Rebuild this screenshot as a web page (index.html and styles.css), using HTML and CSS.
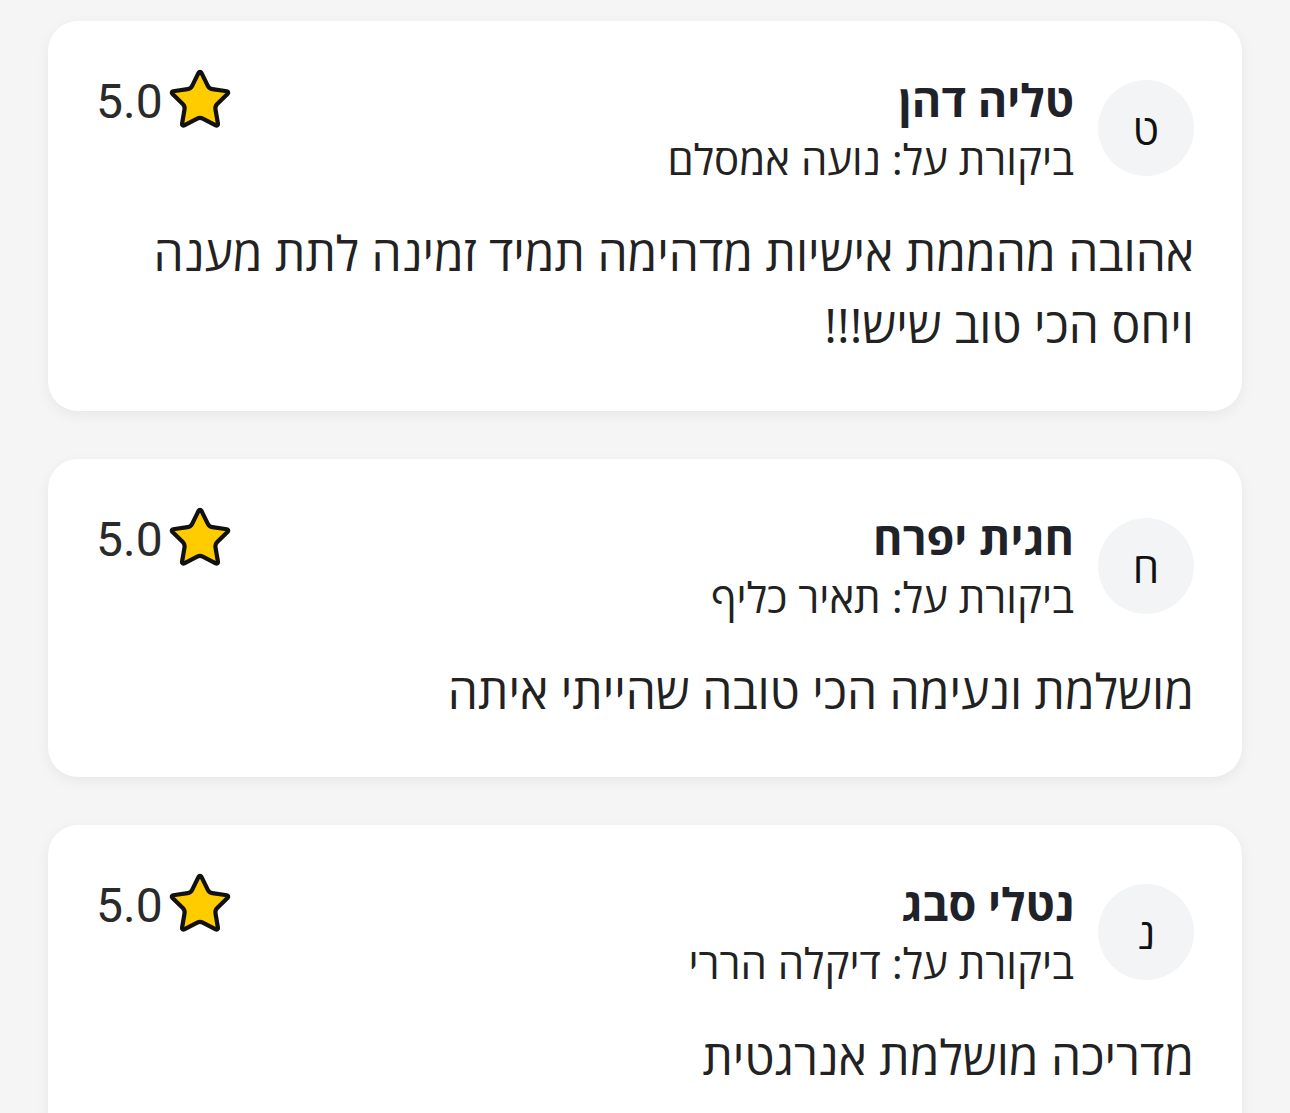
FILE: index.html
```html
<!DOCTYPE html>
<html lang="he" dir="rtl">
<head>
    <meta charset="UTF-8">
    <meta name="viewport" content="width=device-width, initial-scale=1.0">
    <title>ביקורות</title>
    <link rel="stylesheet" href="styles.css">
</head>
<body>
    <div class="reviews">
        <div class="review-card">
            <div class="review-head">
                <div class="author">
                    <div class="avatar">ט</div>
                    <div class="author-info">
                        <div class="author-name">טליה דהן</div>
                        <div class="review-target">ביקורת על: נועה אמסלם</div>
                    </div>
                </div>
                <div class="rating">
                    <svg class="star" viewBox="1 1 22 22"><path d="M11.525 2.295a.53.53 0 0 1 .95 0l2.31 4.679a2.123 2.123 0 0 0 1.595 1.16l5.166.756a.53.53 0 0 1 .294.904l-3.736 3.638a2.123 2.123 0 0 0-.611 1.878l.882 5.14a.53.53 0 0 1-.771.56l-4.618-2.428a2.122 2.122 0 0 0-1.973 0L6.396 21.01a.53.53 0 0 1-.77-.56l.881-5.139a2.122 2.122 0 0 0-.611-1.879L2.16 9.795a.53.53 0 0 1 .294-.906l5.165-.755a2.122 2.122 0 0 0 1.597-1.16z"/></svg>
                    <span class="rating-value">5.0</span>
                </div>
            </div>
            <p class="review-text">אהובה מהממת אישיות מדהימה תמיד זמינה לתת מענה ויחס הכי טוב שיש!!!</p>
        </div>

        <div class="review-card">
            <div class="review-head">
                <div class="author">
                    <div class="avatar">ח</div>
                    <div class="author-info">
                        <div class="author-name">חגית יפרח</div>
                        <div class="review-target">ביקורת על: תאיר כליף</div>
                    </div>
                </div>
                <div class="rating">
                    <svg class="star" viewBox="1 1 22 22"><path d="M11.525 2.295a.53.53 0 0 1 .95 0l2.31 4.679a2.123 2.123 0 0 0 1.595 1.16l5.166.756a.53.53 0 0 1 .294.904l-3.736 3.638a2.123 2.123 0 0 0-.611 1.878l.882 5.14a.53.53 0 0 1-.771.56l-4.618-2.428a2.122 2.122 0 0 0-1.973 0L6.396 21.01a.53.53 0 0 1-.77-.56l.881-5.139a2.122 2.122 0 0 0-.611-1.879L2.16 9.795a.53.53 0 0 1 .294-.906l5.165-.755a2.122 2.122 0 0 0 1.597-1.16z"/></svg>
                    <span class="rating-value">5.0</span>
                </div>
            </div>
            <p class="review-text">מושלמת ונעימה הכי טובה שהייתי איתה</p>
        </div>

        <div class="review-card">
            <div class="review-head">
                <div class="author">
                    <div class="avatar">נ</div>
                    <div class="author-info">
                        <div class="author-name">נטלי סבג</div>
                        <div class="review-target">ביקורת על: דיקלה הררי</div>
                    </div>
                </div>
                <div class="rating">
                    <svg class="star" viewBox="1 1 22 22"><path d="M11.525 2.295a.53.53 0 0 1 .95 0l2.31 4.679a2.123 2.123 0 0 0 1.595 1.16l5.166.756a.53.53 0 0 1 .294.904l-3.736 3.638a2.123 2.123 0 0 0-.611 1.878l.882 5.14a.53.53 0 0 1-.771.56l-4.618-2.428a2.122 2.122 0 0 0-1.973 0L6.396 21.01a.53.53 0 0 1-.77-.56l.881-5.139a2.122 2.122 0 0 0-.611-1.879L2.16 9.795a.53.53 0 0 1 .294-.906l5.165-.755a2.122 2.122 0 0 0 1.597-1.16z"/></svg>
                    <span class="rating-value">5.0</span>
                </div>
            </div>
            <p class="review-text">מדריכה מושלמת אנרגטית</p>
        </div>
    </div>
</body>
</html>
```
FILE: styles.css
```css
body {
    margin: 0;
    background: #f5f5f5;
    font-family: "Open Sans", sans-serif;
    color: #222;
}
.reviews {
    display: flex;
    flex-direction: column;
    gap: 48px;
    padding: 21px 48px 48px;
}
.review-card {
    background: #fff;
    border-radius: 30px;
    padding: 48px 48px 50px;
    box-shadow: 0 4px 14px rgba(0, 0, 0, 0.06);
}
.review-head {
    display: flex;
    justify-content: space-between;
    align-items: flex-start;
}
.author {
    display: flex;
    align-items: center;
    gap: 24px;
}
.avatar {
    width: 96px;
    height: 96px;
    border-radius: 50%;
    background: #f3f4f6;
    display: flex;
    align-items: center;
    justify-content: center;
    font-size: 42px;
    color: #111;
}
.author-name {
    font-size: 45px;
    font-weight: 700;
    line-height: 62px;
    color: #1f2329;
}
.review-target {
    font-size: 42px;
    line-height: 56px;
    color: #222;
}
.rating {
    display: flex;
    align-items: flex-start;
    gap: 6px;
}
.star {
    width: 62px;
    height: 62px;
    fill: #ffcc00;
    stroke: #111;
    stroke-width: 1.5;
    stroke-linejoin: round;
}
.rating-value {
    font-family: Roboto, "Open Sans", sans-serif;
    font-size: 48px;
    line-height: 66px;
    color: #2a2a2a;
}
.review-text {
    margin: 30px 0 0;
    font-size: 48px;
    line-height: 72px;
    color: #222;
}
```
